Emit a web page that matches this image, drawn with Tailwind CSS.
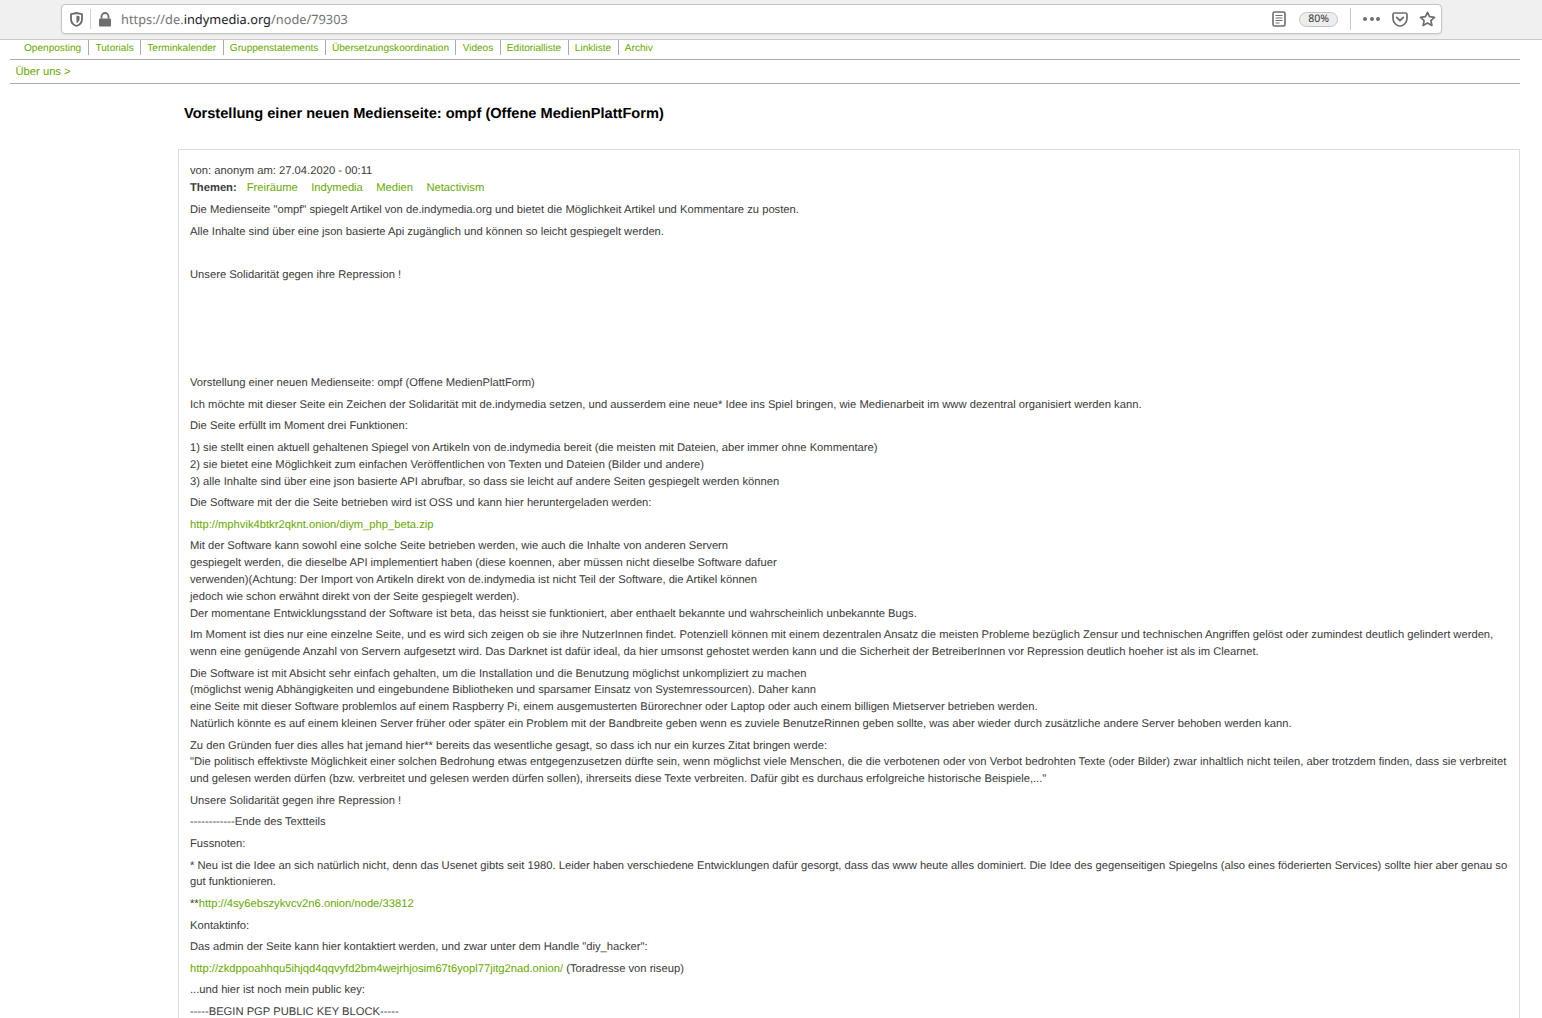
<!DOCTYPE html>
<html lang="de"><head><meta charset="utf-8"><title>Vorstellung</title>
<script src="https://cdn.jsdelivr.net/npm/@tailwindcss/browser@4"></script></head>
<body class="bg-white overflow-hidden h-[1018px] font-['Liberation_Sans',Arial,sans-serif] text-[11.215px] leading-[16.8px] text-[#3a3a3a] [text-rendering:geometricPrecision]">
<header class="h-10 bg-[#f0f0f0] border-b border-[#c8c8c8] px-[61px] pt-[4px] font-['Noto_Sans',Roboto,sans-serif]">
  <div class="h-[30px] w-[1381px] bg-white border border-[#c4c4c4] rounded-[4px] flex items-center shadow-[0_1px_2px_rgba(0,0,0,0.08)]">
    <svg class="ml-[8px] w-[13px] h-[15px]" viewBox="0 0 13 15"><path d="M6.5 1 L12 2.2 V7 C12 10.5 9.5 13 6.5 14 C3.5 13 1 10.5 1 7 V2.2 Z" fill="none" stroke="#6a6a6a" stroke-width="1.8"/><path d="M6.5 3.5 L9.5 4.3 V7 C9.5 9 8 10.5 6.5 11.3 Z" fill="#6a6a6a"/></svg>
    <div class="ml-[7px] w-px h-[20px] bg-[#d0d0d0]"></div>
    <svg class="ml-[7px] w-[14px] h-[15px]" viewBox="0 0 14 15"><path d="M3.5 6.5 V4.5 a3.5 3.5 0 0 1 7 0 V6.5" fill="none" stroke="#6e6e6e" stroke-width="1.8"/><rect x="1" y="6.5" width="12" height="8" rx="1" fill="#6e6e6e"/></svg>
    <div class="ml-[9px] text-[12.8px] leading-[20px] text-[#737373] whitespace-nowrap">https://de.<span class="text-[#1a1a2a]">indymedia.org</span>/node/79303</div>
    <div class="flex-1"></div>
    <svg class="w-[14px] h-[16px]" viewBox="0 0 14 16"><rect x="1" y="1" width="12" height="14" rx="1.5" fill="none" stroke="#6e6e6e" stroke-width="1.6"/><path d="M3.5 4.5 H10.5 M3.5 7 H10.5 M3.5 9.5 H10.5 M3.5 12 H7.5" stroke="#6e6e6e" stroke-width="1.1"/></svg>
    <div class="ml-[13px] w-[39px] h-[15px] rounded-full bg-[#ededed] border border-[#c4c4c4] text-[10.5px] leading-[13px] text-center text-[#333]">80%</div>
    <div class="ml-[12px] w-px h-[22px] bg-[#c8c8c8]"></div>
    <div class="ml-[12px] flex gap-[2.5px]"><span class="w-[4px] h-[4px] rounded-full bg-[#6e6e6e]"></span><span class="w-[4px] h-[4px] rounded-full bg-[#6e6e6e]"></span><span class="w-[4px] h-[4px] rounded-full bg-[#6e6e6e]"></span></div>
    <svg class="ml-[12px] w-[16px] h-[15px]" viewBox="0 0 16 15"><path d="M2.5 1 H13.5 A1.5 1.5 0 0 1 15 2.5 V6.5 C15 10.5 11.5 14 8 14 C4.5 14 1 10.5 1 6.5 V2.5 A1.5 1.5 0 0 1 2.5 1 Z" fill="none" stroke="#6e6e6e" stroke-width="1.7"/><path d="M4.8 5.5 L8 8.6 L11.2 5.5" fill="none" stroke="#6e6e6e" stroke-width="1.8" stroke-linecap="round"/></svg>
    <svg class="ml-[11px] mr-[5px] w-[17px] h-[16px]" viewBox="0 0 17 16"><path d="M8.5 1.3 L10.6 5.7 L15.5 6.3 L11.9 9.6 L12.9 14.5 L8.5 12.1 L4.1 14.5 L5.1 9.6 L1.5 6.3 L6.4 5.7 Z" fill="none" stroke="#6e6e6e" stroke-width="1.7" stroke-linejoin="round"/></svg>
  </div>
</header>
<nav class="mx-[10px] w-[1510px]">
  <ul class="h-[20px] border-b border-[#aaa] pl-[7px] flex items-start text-[10.08px] leading-[15px] text-[#66aa00]">
    <li class="px-[7px] pt-[1px] h-[15px] border-r border-[#aaa]">Openposting</li>
    <li class="px-[6.3px] pt-[1px] h-[15px] border-r border-[#aaa]">Tutorials</li>
    <li class="px-[6.3px] pt-[1px] h-[15px] border-r border-[#aaa]">Terminkalender</li>
    <li class="px-[6.3px] pt-[1px] h-[15px] border-r border-[#aaa]">Gruppenstatements</li>
    <li class="px-[6.3px] pt-[1px] h-[15px] border-r border-[#aaa]">Übersetzungskoordination</li>
    <li class="px-[6.3px] pt-[1px] h-[15px] border-r border-[#aaa]">Videos</li>
    <li class="px-[6.3px] pt-[1px] h-[15px] border-r border-[#aaa]">Editorialliste</li>
    <li class="px-[6.3px] pt-[1px] h-[15px] border-r border-[#aaa]">Linkliste</li>
    <li class="px-[6.3px] pt-[1px] h-[15px]">Archiv</li>
  </ul>
  <div class="h-[24px] border-b border-[#aaa] pl-[5.5px] pt-[4px] text-[#66aa00] leading-[16.8px]">Über uns &gt;</div>
</nav>
<main class="ml-[178px] w-[1342px]">
  <h1 class="pt-[21px] pl-[6px] h-[65px] text-[14.6px] leading-[18px] font-bold text-black">Vorstellung einer neuen Medienseite: ompf (Offene MedienPlattForm)</h1>
  <article class="border border-[#ddd] px-[11px] pt-[13px] h-[900px]">
    <div>von: anonym am: 27.04.2020 - 00:11</div>
    <div class="mb-[5.9px] flex"><b class="mr-[10px]">Themen:</b><a class="mr-[13.4px] text-[#66aa00]">Freiräume</a><a class="mr-[13.4px] text-[#66aa00]">Indymedia</a><a class="mr-[13.4px] text-[#66aa00]">Medien</a><a class="text-[#66aa00]">Netactivism</a></div>
    <div class="[&>p]:mb-[4.8px] [&>p]:min-h-[16.8px]">
    <p>Die Medienseite "ompf" spiegelt Artikel von de.indymedia.org und bietet die Möglichkeit Artikel und Kommentare zu posten.</p>
    <p>Alle Inhalte sind über eine json basierte Api zugänglich und können so leicht gespiegelt werden.</p>
    <p></p>
    <p>Unsere Solidarität gegen ihre Repression !</p>
    <p></p><p></p><p></p><p></p>
    <p>Vorstellung einer neuen Medienseite: ompf (Offene MedienPlattForm)</p>
    <p>Ich möchte mit dieser Seite ein Zeichen der Solidarität mit de.indymedia setzen, und ausserdem eine neue* Idee ins Spiel bringen, wie Medienarbeit im www dezentral organisiert werden kann.</p>
    <p>Die Seite erfüllt im Moment drei Funktionen:</p>
    <p>1) sie stellt einen aktuell gehaltenen Spiegel von Artikeln von de.indymedia bereit (die meisten mit Dateien, aber immer ohne Kommentare)<br>2) sie bietet eine Möglichkeit zum einfachen Veröffentlichen von Texten und Dateien (Bilder und andere)<br>3) alle Inhalte sind über eine json basierte API abrufbar, so dass sie leicht auf andere Seiten gespiegelt werden können</p>
    <p>Die Software mit der die Seite betrieben wird ist OSS und kann hier heruntergeladen werden:</p>
    <p><a class="text-[#66aa00]">http://mphvik4btkr2qknt.onion/diym_php_beta.zip</a></p>
    <p>Mit der Software kann sowohl eine solche Seite betrieben werden, wie auch die Inhalte von anderen Servern<br>gespiegelt werden, die dieselbe API implementiert haben (diese koennen, aber müssen nicht dieselbe Software dafuer<br>verwenden)(Achtung: Der Import von Artikeln direkt von de.indymedia ist nicht Teil der Software, die Artikel können<br>jedoch wie schon erwähnt direkt von der Seite gespiegelt werden).<br>Der momentane Entwicklungsstand der Software ist beta, das heisst sie funktioniert, aber enthaelt bekannte und wahrscheinlich unbekannte Bugs.</p>
    <p>Im Moment ist dies nur eine einzelne Seite, und es wird sich zeigen ob sie ihre NutzerInnen findet. Potenziell können mit einem dezentralen Ansatz die meisten Probleme bezüglich Zensur und technischen Angriffen gelöst oder zumindest deutlich gelindert werden, wenn eine genügende Anzahl von Servern aufgesetzt wird. Das Darknet ist dafür ideal, da hier umsonst gehostet werden kann und die Sicherheit der BetreiberInnen vor Repression deutlich hoeher ist als im Clearnet.</p>
    <p>Die Software ist mit Absicht sehr einfach gehalten, um die Installation und die Benutzung möglichst unkompliziert zu machen<br>(möglichst wenig Abhängigkeiten und eingebundene Bibliotheken und sparsamer Einsatz von Systemressourcen). Daher kann<br>eine Seite mit dieser Software problemlos auf einem Raspberry Pi, einem ausgemusterten Bürorechner oder Laptop oder auch einem billigen Mietserver betrieben werden.<br>Natürlich könnte es auf einem kleinen Server früher oder später ein Problem mit der Bandbreite geben wenn es zuviele BenutzeRinnen geben sollte, was aber wieder durch zusätzliche andere Server behoben werden kann.</p>
    <p>Zu den Gründen fuer dies alles hat jemand hier** bereits das wesentliche gesagt, so dass ich nur ein kurzes Zitat bringen werde:<br>"Die politisch effektivste Möglichkeit einer solchen Bedrohung etwas entgegenzusetzen dürfte sein, wenn möglichst viele Menschen, die die verbotenen oder von Verbot bedrohten Texte (oder Bilder) zwar inhaltlich nicht teilen, aber trotzdem finden, dass sie verbreitet und gelesen werden dürfen (bzw. verbreitet und gelesen werden dürfen sollen), ihrerseits diese Texte verbreiten. Dafür gibt es durchaus erfolgreiche historische Beispiele,..."</p>
    <p>Unsere Solidarität gegen ihre Repression !</p>
    <p>------------Ende des Textteils</p>
    <p>Fussnoten:</p>
    <p>* Neu ist die Idee an sich natürlich nicht, denn das Usenet gibts seit 1980. Leider haben verschiedene Entwicklungen dafür gesorgt, dass das www heute alles dominiert. Die Idee des gegenseitigen Spiegelns (also eines föderierten Services) sollte hier aber genau so gut funktionieren.</p>
    <p>**<a class="text-[#66aa00]">http://4sy6ebszykvcv2n6.onion/node/33812</a></p>
    <p>Kontaktinfo:</p>
    <p>Das admin der Seite kann hier kontaktiert werden, und zwar unter dem Handle "diy_hacker":</p>
    <p><a class="text-[#66aa00]">http://zkdppoahhqu5ihjqd4qqvyfd2bm4wejrhjosim67t6yopl77jitg2nad.onion/</a> (Toradresse von riseup)</p>
    <p>...und hier ist noch mein public key:</p>
    <p>-----BEGIN PGP PUBLIC KEY BLOCK-----</p>
    </div>
  </article>
</main>
</body></html>
